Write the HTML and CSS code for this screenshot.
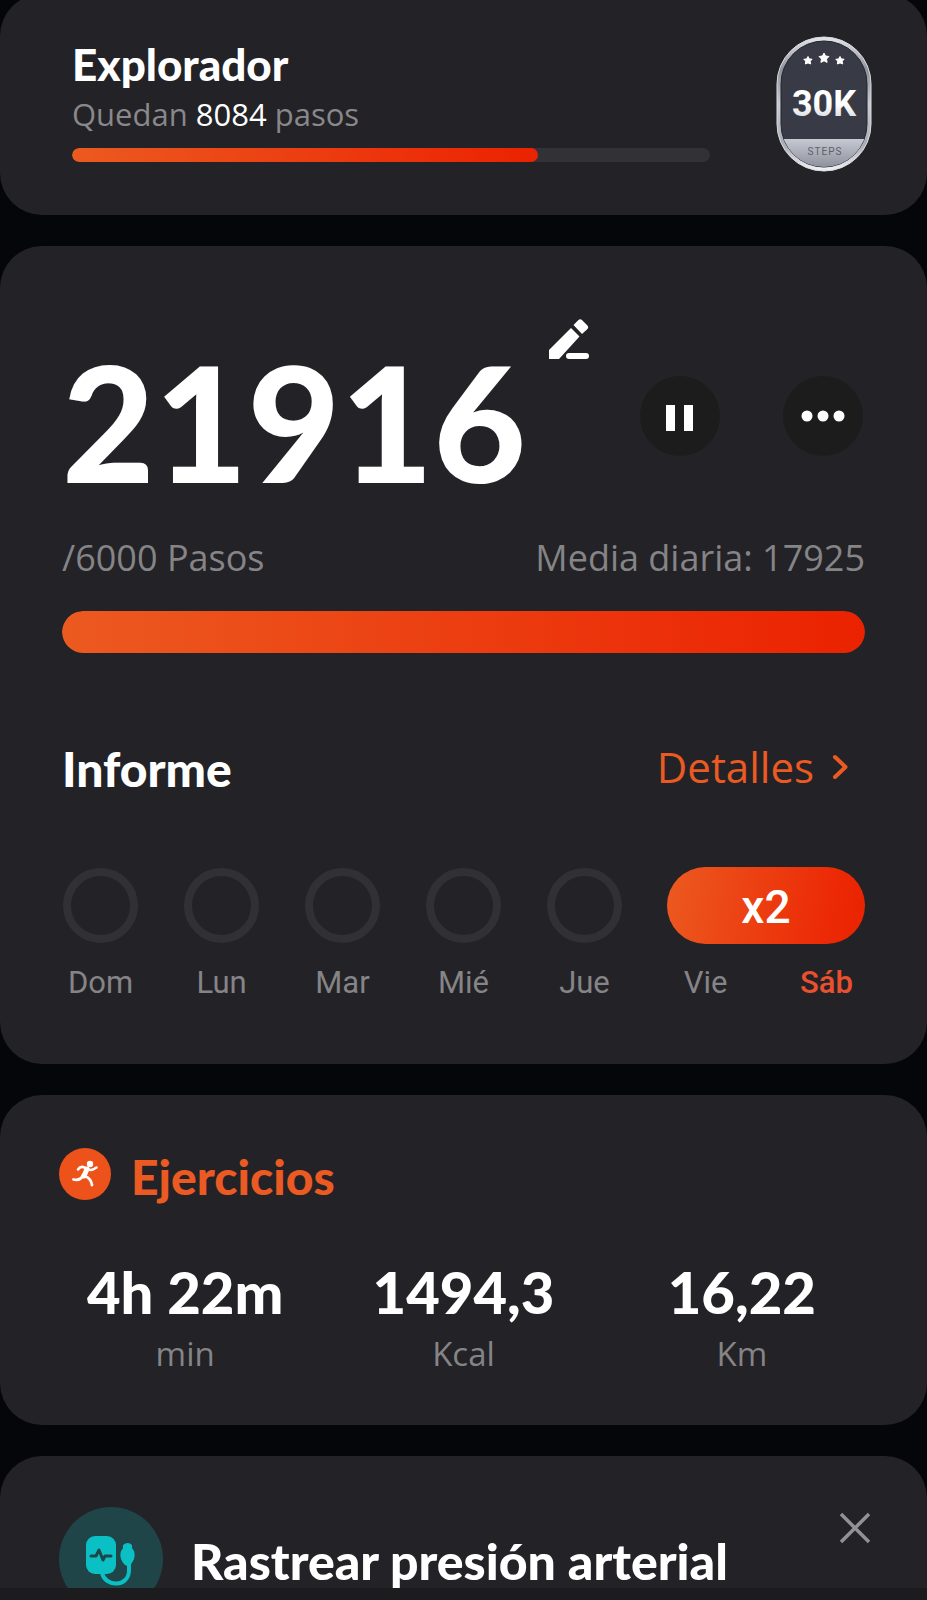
FILE: index.html
```html
<!DOCTYPE html>
<html lang="es">
<head>
    <meta charset="UTF-8">
    <meta name="viewport" content="width=device-width, initial-scale=1.0">
    <title>Podómetro</title>
    <link rel="stylesheet" href="styles.css">
</head>
<body>
    <main class="content">
        <section class="card level">
            <div class="level-info">
                <h2 class="level-title">Explorador</h2>
                <p class="level-left">Quedan <strong>8084</strong> pasos</p>
                <div class="bar bar-small">
                    <div class="bar-fill" style="width: 73%"></div>
                </div>
            </div>
            <svg class="badge" viewBox="0 0 96 136" role="img" aria-label="30K steps">
                <defs>
                    <linearGradient id="rim" x1="0" y1="0" x2="0" y2="1">
                        <stop offset="0" stop-color="#e4e6ea"/>
                        <stop offset="0.25" stop-color="#8d9099"/>
                        <stop offset="0.5" stop-color="#c9cbd2"/>
                        <stop offset="0.8" stop-color="#a9acb5"/>
                        <stop offset="1" stop-color="#f2f3f5"/>
                    </linearGradient>
                    <linearGradient id="silver" x1="0" y1="0" x2="0" y2="1">
                        <stop offset="0" stop-color="#c6c9d2"/>
                        <stop offset="1" stop-color="#8b8e99"/>
                    </linearGradient>
                    <linearGradient id="digits" x1="0" y1="0" x2="0" y2="1">
                        <stop offset="0.5" stop-color="#ffffff"/>
                        <stop offset="1" stop-color="#c9ccd4"/>
                    </linearGradient>
                    <clipPath id="inner">
                        <rect x="5" y="5" width="86" height="126" rx="43"/>
                    </clipPath>
                </defs>
                <rect x="1" y="1" width="94" height="134" rx="47" fill="url(#rim)" stroke="#d9dbe0"/>
                <rect x="5" y="5" width="86" height="126" rx="43" fill="#383b45" stroke="#23252d"/>
                <rect x="5" y="103" width="86" height="30" fill="url(#silver)" clip-path="url(#inner)"/>
                <g fill="#fff">
                    <path d="M48 17l1.500 3 3.400.5-2.400 2.500.6 3.400-3.100-1.600-3.100 1.600.6-3.400-2.400-2.500 3.400-.5z" stroke="#fff"/>
                    <path d="M32 20.500l1.300 2.400 2.800.3-1.900 2 .5 2.800-2.700-1.100-2.600 1.100.3-2.800-1.900-1.900 2.900-.4z" stroke="#fff"/>
                    <path d="M64 20.500l1.300 2.400 2.800.3-1.900 2 .5 2.800-2.700-1.100-2.600 1.100.3-2.800-1.900-1.900 2.900-.4z" stroke="#fff"/>
                </g>
                <text class="badge-number" x="48" y="80" text-anchor="middle" fill="url(#digits)">30K</text>
                <text class="badge-label" x="49" y="119" text-anchor="middle">STEPS</text>
            </svg>
        </section>

        <section class="card steps">
            <div class="steps-top">
                <span class="steps-count">21916</span>
                <button class="icon-btn edit-btn" type="button" aria-label="Editar">
                    <svg width="40" height="40" viewBox="0 0 40 40" fill="#fff">
                        <path d="M0 31L22 9l8.500 8.500L10 40H0z"/>
                        <path d="M24.500 6l4.700-4.700q2-2 4 0l5 5q2 2 0 4L33 15z"/>
                        <rect x="17" y="34" width="23" height="6" rx="3"/>
                    </svg>
                </button>
                <div class="steps-actions">
                    <button class="icon-btn round-btn" type="button" aria-label="Pausar">
                        <svg width="28" height="30" viewBox="0 0 28 30" fill="#fff">
                            <rect x="0" y="4" width="9" height="26"/>
                            <rect x="18" y="4" width="9" height="26"/>
                        </svg>
                    </button>
                    <button class="icon-btn round-btn" type="button" aria-label="Más opciones">
                        <svg width="44" height="12" viewBox="0 0 44 12" fill="#fff">
                            <circle cx="6" cy="6" r="5.500"/>
                            <circle cx="22" cy="6" r="5.500"/>
                            <circle cx="38" cy="6" r="5.500"/>
                        </svg>
                    </button>
                </div>
            </div>
            <div class="steps-meta">
                <span>/6000 Pasos</span>
                <span>Media diaria: 17925</span>
            </div>
            <div class="bar bar-large">
                <div class="bar-fill" style="width: 100%"></div>
            </div>

            <div class="report-head">
                <h2 class="report-title">Informe</h2>
                <a class="details" href="#">Detalles
                    <svg width="16" height="26" viewBox="0 0 16 26" fill="none" stroke="#ea5a22" stroke-width="4" stroke-linecap="round" stroke-linejoin="round">
                        <path d="M3 3l10.500 10L3 23"/>
                    </svg>
                </a>
            </div>
            <div class="week">
                <span class="ring"></span>
                <span class="ring"></span>
                <span class="ring"></span>
                <span class="ring"></span>
                <span class="ring"></span>
                <span class="streak">x2</span>
                <span class="day">Dom</span>
                <span class="day">Lun</span>
                <span class="day">Mar</span>
                <span class="day">Mié</span>
                <span class="day">Jue</span>
                <span class="day">Vie</span>
                <span class="day today">Sáb</span>
            </div>
        </section>

        <section class="card exercise">
            <div class="exercise-head">
                <svg class="exercise-icon" viewBox="0 0 52 52" fill="none" stroke="#fff" stroke-linecap="round" stroke-linejoin="round">
                    <circle cx="26" cy="26" r="26" fill="#ec5219" stroke="none"/>
                    <circle cx="31" cy="16" r="3.200" fill="#fff" stroke="none"/>
                    <path d="M19 21.500q2-3 5-2.500l4 1.500q3 3.500 9.500-1" stroke-width="2.600"/>
                    <path d="M28 21L25 28" stroke-width="5"/>
                    <path d="M24 27q-2 6-9.500 4.500" stroke-width="2.800"/>
                    <path d="M26 28q6 2.500 7 9" stroke-width="2.800"/>
                </svg>
                <h2 class="exercise-title">Ejercicios</h2>
            </div>
            <div class="stats">
                <div class="stat">
                    <span class="stat-value">4h 22m</span>
                    <span class="stat-unit">min</span>
                </div>
                <div class="stat">
                    <span class="stat-value">1494,3</span>
                    <span class="stat-unit">Kcal</span>
                </div>
                <div class="stat">
                    <span class="stat-value">16,22</span>
                    <span class="stat-unit">Km</span>
                </div>
            </div>
        </section>

        <section class="card pressure">
            <svg class="pressure-icon" viewBox="0 0 104 104" fill="none" stroke-linecap="round" stroke-linejoin="round">
                <circle cx="52" cy="52" r="52" fill="#1f4548"/>
                <rect x="27" y="29" width="30" height="38" rx="9" fill="#0bc0c4"/>
                <path d="M32 49h5l3-6 4 10 2-4h6" stroke="#1f4548" stroke-width="3"/>
                <path d="M43 66c3 14 27 15 27-3V54" stroke="#0bc0c4" stroke-width="4"/>
                <path d="M64 38q5-4 9 0v3q4 5 2 11-3 7-6.500 7T62 52q-2-6 2-11z" fill="#0bc0c4"/>
            </svg>
            <h2 class="pressure-title">Rastrear presión arterial</h2>
            <button class="icon-btn close-btn" type="button" aria-label="Cerrar">
                <svg width="32" height="32" viewBox="0 0 32 32" stroke="#929197" stroke-width="3.500">
                    <path d="M2 2l28 28M30 2L2 30"/>
                </svg>
            </button>
        </section>
    </main>
    <footer class="bottom-bar"></footer>
</body>
</html>
```
FILE: styles.css
```css
* {
    box-sizing: border-box;
}
body {
    display: flex;
    flex-direction: column;
    height: 100vh;
    margin: 0;
    overflow: hidden;
    background: #05060a;
    color: #fff;
    font-family: 'Open Sans', 'Noto Sans', sans-serif;
}
h2, p {
    margin: 0;
}
h2 {
    font-family: 'Lato', sans-serif;
    font-weight: 900;
}
.content {
    display: flex;
    flex: 1;
    flex-direction: column;
    gap: 31px;
    min-height: 0;
    margin-top: -6px;
    overflow: hidden;
}
.card {
    flex-shrink: 0;
    background: #232227;
    border-radius: 42px;
}
.icon-btn {
    display: flex;
    align-items: center;
    justify-content: center;
    padding: 0;
    background: none;
    border: none;
    cursor: pointer;
}
.bar {
    overflow: hidden;
    background: #323136;
}
.bar-fill {
    height: 100%;
    background: linear-gradient(90deg, #ec5a20, #ec2a06 85%, #ea2200);
    border-radius: inherit;
}
.bar-small {
    height: 14px;
    margin-top: 12px;
    border-radius: 7px;
}
.bar-large {
    height: 42px;
    margin-top: 31px;
    border-radius: 21px;
}

/* Nivel */
.level {
    display: flex;
    align-items: flex-start;
    justify-content: space-between;
    gap: 66px;
    padding: 42px 55px 43px 72px;
}
.level-info {
    flex: 1;
    padding-top: 4px;
}
.level-title {
    font-size: 44px;
    line-height: 48px;
}
.level-left {
    margin-top: 4px;
    color: #89888a;
    font-size: 31px;
    line-height: 44px;
}
.level-left strong {
    color: #fff;
    font-weight: 500;
}
.badge {
    width: 96px;
    height: 136px;
}
.badge-number {
    font-family: 'Roboto', sans-serif;
    font-size: 36px;
    font-weight: 700;
}
.badge-label {
    fill: #5d606b;
    font-family: 'Roboto', sans-serif;
    font-size: 10px;
    letter-spacing: 1px;
}

/* Pasos */
.steps {
    padding: 71px 62px 62px;
}
.steps-top {
    display: flex;
    align-items: center;
}
.steps-count {
    font-family: 'Lato', sans-serif;
    font-size: 160px;
    font-weight: 900;
    line-height: 208px;
}
.edit-btn {
    align-self: flex-start;
    margin: 2px 0 0 23px;
}
.steps-actions {
    display: flex;
    gap: 63px;
    margin: 0 2px 10px auto;
}
.round-btn {
    width: 80px;
    height: 80px;
    background: #1c1c1d;
    border-radius: 50%;
}
.steps-meta {
    display: flex;
    justify-content: space-between;
    margin-top: 11px;
    color: #858486;
    font-size: 36px;
    line-height: 44px;
}
.report-head {
    display: flex;
    align-items: flex-start;
    justify-content: space-between;
    margin-top: 87px;
}
.report-title {
    font-size: 48px;
    line-height: 58px;
}
.details {
    display: flex;
    align-items: center;
    gap: 18px;
    margin-right: 17px;
    color: #ea5a22;
    font-size: 42px;
    line-height: 54px;
    text-decoration: none;
}
.week {
    display: grid;
    grid-template-columns: repeat(7, 1fr);
    row-gap: 20px;
    align-items: center;
    justify-items: center;
    margin: 69px -22px 0;
    font-family: 'Roboto', sans-serif;
}
.ring {
    width: 75px;
    height: 75px;
    border: 8px solid #313035;
    border-radius: 50%;
}
.streak {
    grid-column: span 2;
    justify-self: stretch;
    margin: 0 22px;
    padding-top: 4px;
    background: linear-gradient(100deg, #ec5a20, #ec2a06 80%, #ea2200);
    border-radius: 39px;
    font-size: 46px;
    font-weight: 500;
    line-height: 73px;
    text-align: center;
}
.day {
    color: #858486;
    font-size: 31px;
    line-height: 38px;
}
.today {
    color: #e9502f;
    font-weight: 500;
}

/* Ejercicios */
.exercise {
    padding: 53px 46px 49px;
}
.exercise-head {
    display: flex;
    align-items: flex-start;
    gap: 20px;
    padding-left: 13px;
}
.exercise-icon {
    width: 52px;
    height: 52px;
}
.exercise-title {
    color: #ea5a22;
    font-size: 48px;
    line-height: 58px;
}
.stats {
    display: grid;
    grid-template-columns: repeat(3, 1fr);
    margin-top: 54px;
    text-align: center;
}
.stat {
    display: flex;
    flex-direction: column;
    gap: 8px;
}
.stat-value {
    font-family: 'Lato', sans-serif;
    font-size: 58px;
    font-weight: 900;
    line-height: 64px;
}
.stat-unit {
    color: #858486;
    font-size: 33px;
    line-height: 44px;
}

/* Presión arterial */
.pressure {
    display: flex;
    align-items: flex-start;
    padding: 51px 56px 51px 59px;
}
.pressure-icon {
    flex-shrink: 0;
    width: 104px;
    height: 104px;
}
.pressure-title {
    margin-left: 28px;
    font-size: 50px;
    line-height: 108px;
}
.close-btn {
    margin: 5px 0 0 auto;
}
.bottom-bar {
    height: 12px;
    background: #1c1c1e;
}
```
